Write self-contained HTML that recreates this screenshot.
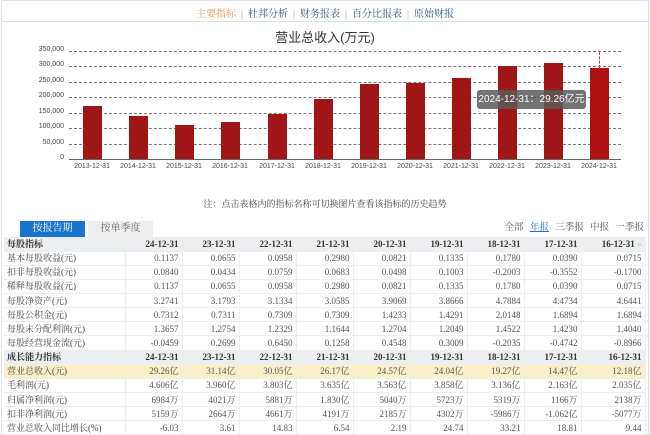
<!DOCTYPE html>
<html><head><meta charset="utf-8"><style>
*{margin:0;padding:0;box-sizing:border-box}
body{width:650px;height:435px;overflow:hidden;background:#fff;font-family:"Liberation Serif","Noto Serif CJK SC",serif;color:#333;position:relative}
.frame{position:absolute;left:1px;top:0;width:648px;height:435px;border:1px solid #d8e2e8}
.nav{position:absolute;top:5px;left:0;width:650px;text-align:center;font-size:10px;color:#2a5a8a}
.nav .on{color:#e8904a}.nav .sep{color:#aaa;margin:0 5px}
.hr{position:absolute;top:21px;left:2px;width:646px;height:1px;background:#d8e2e8}
.title{position:absolute;top:27px;left:0;width:650px;text-align:center;font-family:"Liberation Sans","Noto Sans CJK SC",sans-serif;font-size:13px;color:#333}
.yl{position:absolute;left:20px;width:44px;text-align:right;font-family:"Liberation Sans",sans-serif;font-size:7px;color:#444}
.grid{position:absolute;left:69px;width:552px;border-top:1px dashed #777}
.bar{position:absolute;width:19px;background:#a01616}
.xl{position:absolute;top:163px;width:50px;text-align:center;font-family:"Liberation Sans",sans-serif;font-size:7px;color:#444}
.note{position:absolute;top:197px;left:0;width:650px;text-align:center;font-size:9px;color:#444}
.tab{position:absolute;top:221px;height:16px;width:65px;text-align:center;font-size:10px;line-height:16px}
.fl{position:absolute;top:219px;right:6px;font-size:9.5px;color:#555;word-spacing:4px}
table{position:absolute;top:237px;left:4px;width:641px;border-collapse:collapse;table-layout:fixed;font-size:9px;font-family:"Liberation Serif","Noto Serif CJK SC",serif}
tr{height:14.15px}
td{height:14.15px;line-height:12px;padding:0 3px;text-align:right;border-bottom:1px solid #eee;border-right:1px solid #eee;color:#555;white-space:nowrap;overflow:hidden}
td:first-child{text-align:left;color:#444}
tr.h td{background:#eceef0;font-weight:bold;color:#333}
tr.y td{background:#fbefc8}
</style></head><body>
<div class="frame"></div>
<div class="nav"><span class="on">主要指标</span><span class="sep">|</span>杜邦分析<span class="sep">|</span>财务报表<span class="sep">|</span>百分比报表<span class="sep">|</span>原始财报</div>
<div class="hr"></div>
<div class="title">营业总收入(万元)</div>
<div class="yl" style="top:46px">350,000</div><div class="yl" style="top:61px">300,000</div><div class="yl" style="top:77px">250,000</div><div class="yl" style="top:92px">200,000</div><div class="yl" style="top:108px">150,000</div><div class="yl" style="top:123px">100,000</div><div class="yl" style="top:139px">50,000</div><div class="yl" style="top:154px">0</div>
<div class="grid" style="top:51px"></div><div class="grid" style="top:66px"></div><div class="grid" style="top:82px"></div><div class="grid" style="top:97px"></div><div class="grid" style="top:113px"></div><div class="grid" style="top:128px"></div><div class="grid" style="top:144px"></div>
<div style="position:absolute;left:69px;top:159px;width:552px;height:1px;background:#666"></div>
<div class="bar" style="left:83px;top:106px;height:53px"></div>
<div class="bar" style="left:129px;top:116px;height:43px"></div>
<div class="bar" style="left:175px;top:125px;height:34px"></div>
<div class="bar" style="left:221px;top:122px;height:37px"></div>
<div class="bar" style="left:268px;top:114px;height:45px"></div>
<div class="bar" style="left:314px;top:99px;height:60px"></div>
<div class="bar" style="left:360px;top:84px;height:75px"></div>
<div class="bar" style="left:406px;top:83px;height:76px"></div>
<div class="bar" style="left:452px;top:78px;height:81px"></div>
<div class="bar" style="left:498px;top:66px;height:93px"></div>
<div class="bar" style="left:544px;top:63px;height:96px"></div>
<div class="bar" style="left:590px;top:68px;height:91px;background:#b01212"></div>
<div style="position:absolute;left:599px;top:52px;height:16px;border-left:1px dashed #d33"></div>
<div style="position:absolute;left:477px;top:90px;width:109px;height:19px;background:rgba(90,90,90,.85);border-radius:3px;color:#fff;font-family:'Liberation Sans','Noto Sans CJK SC',sans-serif;font-size:10px;line-height:19px;text-align:center">2024-12-31：29.26亿元</div>
<div class="xl" style="left:67px">2013-12-31</div><div class="xl" style="left:113px">2014-12-31</div><div class="xl" style="left:159px">2015-12-31</div><div class="xl" style="left:205px">2016-12-31</div><div class="xl" style="left:252px">2017-12-31</div><div class="xl" style="left:298px">2018-12-31</div><div class="xl" style="left:344px">2019-12-31</div><div class="xl" style="left:390px">2020-12-31</div><div class="xl" style="left:436px">2021-12-31</div><div class="xl" style="left:482px">2022-12-31</div><div class="xl" style="left:528px">2023-12-31</div><div class="xl" style="left:574px">2024-12-31</div>
<div class="note">注：点击表格内的指标名称可切换图片查看该指标的历史趋势</div>
<div class="tab" style="left:20px;background:#1a74cc;color:#fff">按报告期</div>
<div class="tab" style="left:88px;background:#eee;color:#666">按单季度</div>
<div class="fl">全部 <span style="color:#1a74cc;text-decoration:underline">年报</span> 三季报 中报 一季报</div>
<table>
<colgroup><col style="width:121px"><col style="width:57px"><col style="width:57px"><col style="width:57px"><col style="width:57px"><col style="width:57px"><col style="width:57px"><col style="width:57px"><col style="width:57px"><col style="width:64px"></colgroup>
<tr class="h"><td>每股指标</td><td>24-12-31</td><td>23-12-31</td><td>22-12-31</td><td>21-12-31</td><td>20-12-31</td><td>19-12-31</td><td>18-12-31</td><td>17-12-31</td><td>16-12-31 <span style="color:#bbb;font-weight:normal">»</span></td></tr>
<tr><td>基本每股收益(元)</td><td>0.1137</td><td>0.0655</td><td>0.0958</td><td>0.2980</td><td>0.0821</td><td>0.1335</td><td>0.1780</td><td>0.0390</td><td>0.0715</td></tr>
<tr><td>扣非每股收益(元)</td><td>0.0840</td><td>0.0434</td><td>0.0759</td><td>0.0683</td><td>0.0498</td><td>0.1003</td><td>-0.2003</td><td>-0.3552</td><td>-0.1700</td></tr>
<tr><td>稀释每股收益(元)</td><td>0.1137</td><td>0.0655</td><td>0.0958</td><td>0.2980</td><td>0.0821</td><td>0.1335</td><td>0.1780</td><td>0.0390</td><td>0.0715</td></tr>
<tr><td>每股净资产(元)</td><td>3.2741</td><td>3.1793</td><td>3.1334</td><td>3.0585</td><td>3.9069</td><td>3.8666</td><td>4.7884</td><td>4.4734</td><td>4.6441</td></tr>
<tr><td>每股公积金(元)</td><td>0.7312</td><td>0.7311</td><td>0.7309</td><td>0.7309</td><td>1.4233</td><td>1.4291</td><td>2.0148</td><td>1.6894</td><td>1.6894</td></tr>
<tr><td>每股未分配利润(元)</td><td>1.3657</td><td>1.2754</td><td>1.2329</td><td>1.1644</td><td>1.2704</td><td>1.2049</td><td>1.4522</td><td>1.4230</td><td>1.4040</td></tr>
<tr><td>每股经营现金流(元)</td><td>-0.0459</td><td>0.2699</td><td>0.6450</td><td>0.1258</td><td>0.4548</td><td>0.3009</td><td>-0.2035</td><td>-0.4742</td><td>-0.8966</td></tr>
<tr class="h"><td>成长能力指标</td><td>24-12-31</td><td>23-12-31</td><td>22-12-31</td><td>21-12-31</td><td>20-12-31</td><td>19-12-31</td><td>18-12-31</td><td>17-12-31</td><td>16-12-31</td></tr>
<tr class="y"><td>营业总收入(元)</td><td>29.26亿</td><td>31.14亿</td><td>30.05亿</td><td>26.17亿</td><td>24.57亿</td><td>24.04亿</td><td>19.27亿</td><td>14.47亿</td><td>12.18亿</td></tr>
<tr><td>毛利润(元)</td><td>4.606亿</td><td>3.960亿</td><td>3.803亿</td><td>3.635亿</td><td>3.563亿</td><td>3.858亿</td><td>3.136亿</td><td>2.163亿</td><td>2.035亿</td></tr>
<tr><td>归属净利润(元)</td><td>6984万</td><td>4021万</td><td>5881万</td><td>1.830亿</td><td>5040万</td><td>5723万</td><td>5319万</td><td>1166万</td><td>2138万</td></tr>
<tr><td>扣非净利润(元)</td><td>5159万</td><td>2664万</td><td>4661万</td><td>4191万</td><td>2185万</td><td>4302万</td><td>-5986万</td><td>-1.062亿</td><td>-5077万</td></tr>
<tr><td>营业总收入同比增长(%)</td><td>-6.03</td><td>3.61</td><td>14.83</td><td>6.54</td><td>2.19</td><td>24.74</td><td>33.21</td><td>18.81</td><td>9.44</td></tr>
</table>
</body></html>
